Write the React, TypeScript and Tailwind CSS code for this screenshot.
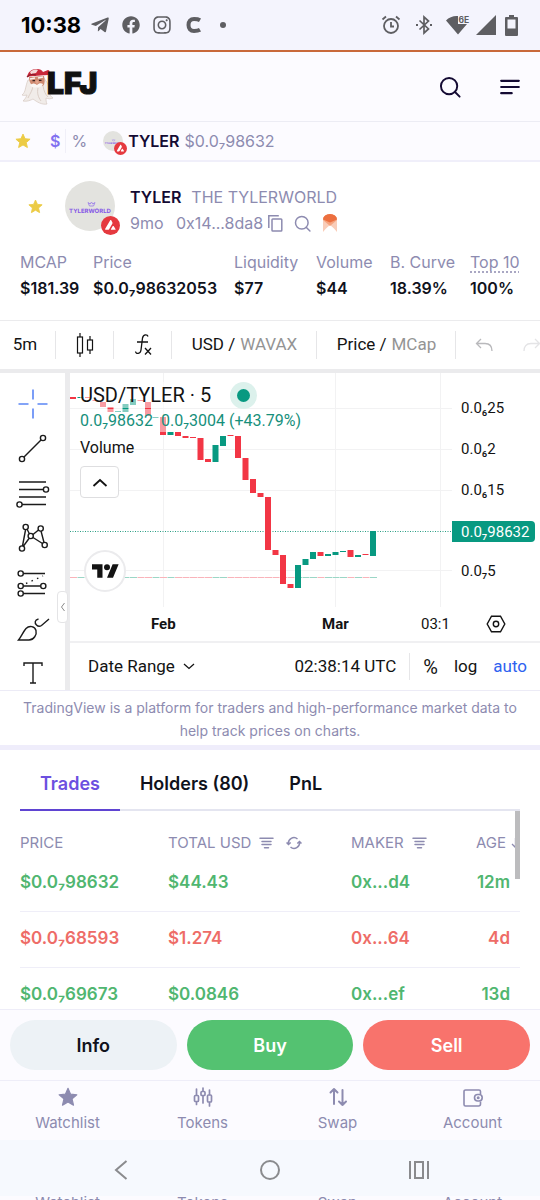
import React from "react";
import { FaTelegramPlane, FaFacebook, FaInstagram } from "react-icons/fa";

const STAR =
  "M12 1.6l3.1 7 7.5.7-5.7 5 1.7 7.5L12 17.9l-6.6 3.9 1.7-7.5-5.7-5 7.5-.7z";

function Star({ className }: { className: string }) {
  return (
    <svg viewBox="0 0 24 24" className={className} fill="currentColor" stroke="currentColor" strokeWidth="1.4" strokeLinejoin="round">
      <path d={STAR} />
    </svg>
  );
}

function Search({ className }: { className: string }) {
  return (
    <svg viewBox="0 0 24 24" className={className} fill="none" stroke="currentColor" strokeWidth="2.1" strokeLinecap="round">
      <circle cx="11" cy="11" r="8.9" />
      <path d="M17.2 17.2l5.3 5.3" />
    </svg>
  );
}

function Avax({ className }: { className: string }) {
  return (
    <svg viewBox="0 0 18 18" className={className}>
      <circle cx="9" cy="9" r="9" fill="#e5393f" />
      <path d="M8.6 4.3c.4-.6.9-.6 1.2 0l.9 1.6c.3.5.3.9 0 1.4l-3 5.2c-.3.4-.5.6-1 .6H4.600c-.7 0-.9-.4-.6-1z" fill="#fff" />
      <path d="M11 9.800c.3-.5.8-.5 1.100 0l1.600 2.400c.3.5.1.9-.5.9h-3.200c-.6 0-.8-.4-.5-.9z" fill="#fff" />
    </svg>
  );
}

function TokenAvatar({ className }: { className: string }) {
  return (
    <svg viewBox="0 0 50 50" className={className}>
      <circle cx="25" cy="25" r="25" fill="#e3e3df" />
      <path d="M23 21.500l1.500 3.500h4l1.500-3.500-2.300 1.500-1.200-2-1.300 2z" fill="none" stroke="#a58be8" strokeWidth="1" />
      <text x="25" y="31.500" textAnchor="middle" fontSize="6" fontWeight="700" fill="#8657e6" textRendering="geometricPrecision" fontFamily="Inter, sans-serif">
        TYLERWORLD
      </text>
    </svg>
  );
}

function Wizard() {
  return (
    <svg viewBox="0 0 34 38" className="h-[38px] w-[34px]">
      <path d="M7 12C4 19 5 24 1 27c2 1 4 0 5 0-1 3-3 5-4 6 4 1 8-1 10-2 4 3 9 6 14 5-1-2-1-4-1-6 2 1 5 1 7 0-5-3-4-9-5-14L23 10z" fill="#f1ece9" stroke="#d6c8c2" strokeWidth=".7" />
      <path d="M12 18c-1 6-4 9-5 12M17 20c-1 5 0 9 3 13M22 18c1 5 2 8 5 11" fill="none" stroke="#d4c5bd" strokeWidth=".8" />
      <path d="M8 9l15-1c1 4 1 8-1 10-3-2-4 0-6 1-4 0-8-3-8-10z" fill="#cf8b72" />
      <path d="M9 11l5-1M17 10l5-1" stroke="#f8f2ef" strokeWidth="1.700" />
      <path d="M11.500 12.700h2.500M18 12.300h2.500" stroke="#3b2320" strokeWidth="1.200" />
      <path d="M14 14l2-2 2 2-2 2z" fill="#e3a58d" />
      <path d="M9 17c3-2 5-2 7 0 2-2 4-2 6-1-1 3-4 3-6 3-2 1-5 1-7-2z" fill="#faf7f5" />
      <path d="M6 9C7 4 10 1 16 1c3 0 5 1 6 3l5-2c2 0 2 3 0 5-6 0-10 1-13 1-3 0-5 0-8 1z" fill="#c8283a" />
      <path d="M9 4c2-2 5-3 8-2l-2 3-5 1z" fill="#f3d9d8" />
      <path d="M6 9c3-3 6-3 9-2" stroke="#8f1c2b" strokeWidth="1.300" fill="none" />
    </svg>
  );
}

function StatusBar() {
  return (
    <div className="flex h-[52px] items-center border-b-2 border-[#c9693a] bg-[#f4f4fd] pr-[22px] pl-[21px] text-[#5e5e62]">
      <span className="w-[69px] text-[22px] font-bold text-black">10:38</span>
      <FaTelegramPlane className="h-5 w-5" />
      <FaFacebook className="ml-[12px] h-[18px] w-[18px]" />
      <FaInstagram className="ml-[12px] h-5 w-5" />
      <svg viewBox="0 0 16 16" className="ml-[14px] h-4 w-4" fill="none" stroke="currentColor" strokeWidth="4">
        <path d="M14 3.200C12 2 9 2 8 2 4.500 2 2.500 4.500 2.500 8S4.500 14 8 14c2 0 4 0 6-1.200" />
      </svg>
      <span className="ml-[18px] h-[6px] w-[6px] rounded-full bg-current" />
      <span className="grow" />
      <svg viewBox="0 0 20 20" className="h-5 w-5" fill="none" stroke="currentColor" strokeWidth="1.800">
        <circle cx="10" cy="11" r="7" />
        <path d="M10 7v4.500h3M1.500 4.500L5 1.500M18.500 4.500L15 1.500" />
      </svg>
      <svg viewBox="0 0 18 20" className="ml-[14px] h-5 w-[18px]" fill="none" stroke="currentColor" strokeWidth="1.700">
        <path d="M4.500 5.500l9 8.500L9 18V2l4.500 4-9 8.500" />
        <path d="M1 10h2M15 10h2" strokeWidth="2.200" />
      </svg>
      <svg viewBox="0 0 24 22" className="ml-[13px] h-[22px] w-6" fill="currentColor">
        <path d="M0 6.500C3 3 8 1.500 12 2v8h9l-9 10.500z" />
        <text x="12.500" y="8.500" fontSize="8.500" fontWeight="700" fontFamily="Inter, sans-serif">6E</text>
      </svg>
      <svg viewBox="0 0 20 20" className="ml-[6px] h-5 w-5" fill="currentColor">
        <path d="M20 0v20H0z" />
      </svg>
      <svg viewBox="0 0 13 21" className="ml-[9px] h-[21px] w-[13px]" fill="currentColor">
        <path fillRule="evenodd" d="M4 0h5v2h3a1 1 0 011 1v17a1 1 0 01-1 1H1a1 1 0 01-1-1V3a1 1 0 011-1h3zM2.500 4.500v9h8v-9z" />
      </svg>
    </div>
  );
}

function Header() {
  return (
    <header className="flex h-[70px] items-center justify-between border-b border-[#ececf4] bg-[#fcfbff] pr-[20px] pl-[21px]">
      <a href="#home" aria-label="LFJ home" className="flex items-center">
        <Wizard />
        <span className="-ml-[8px] pb-[7px] text-[30px] leading-none font-black text-[#111] [-webkit-text-stroke:1px_#111]">LFJ</span>
      </a>
      <div className="flex items-center gap-[39px] text-[#140a33]">
        <button aria-label="Search">
          <Search className="h-[22px] w-[22px]" />
        </button>
        <button aria-label="Menu">
          <svg viewBox="0 0 20 16" className="h-4 w-5" stroke="currentColor" strokeWidth="2.200" strokeLinecap="round">
            <path d="M1.200 1.800h17.600M1.200 8h17.600M1.200 14.200h10.500" />
          </svg>
        </button>
      </div>
    </header>
  );
}

function Ticker() {
  return (
    <div className="flex h-[40px] items-center border-b-2 border-[#f0effa] bg-[#fcfbff] pl-[15px] text-[16px] text-[#8d8bb0]">
      <button aria-label="Favourites"><Star className="block h-4 w-4 text-[#eccb45]" /></button>
      <button className="ml-[19px] font-semibold text-[#8271f0]">$</button>
      <span className="mx-[5px] h-6 w-px bg-[#f0eff8]" />
      <button>%</button>
      <a href="#tyler" className="ml-[16px] flex items-center">
        <span className="relative mr-[5px] block">
          <TokenAvatar className="block h-5 w-5" />
          <Avax className="absolute top-[11px] left-[11px] h-[13px] w-[13px]" />
        </span>
        <span className="font-semibold text-[#140a33]">TYLER</span>
        <span className="ml-[5px]">$0.0₇98632</span>
      </a>
    </div>
  );
}

const stats = [
  ["MCAP", "$181.39"],
  ["Price", "$0.0₇98632053"],
  ["Liquidity", "$77"],
  ["Volume", "$44"],
  ["B. Curve", "18.39%"],
  ["Top 10", "100%"],
];

function TokenInfo() {
  return (
    <section className="h-[158px] bg-white pt-[14px] text-[#8d8bb0]">
      <div className="flex items-center pl-[28px]">
        <button aria-label="Watch TYLER"><Star className="block h-[15px] w-[15px] text-[#eccb45]" /></button>
        <div className="relative ml-[22px]">
          <TokenAvatar className="block h-[50px] w-[50px]" />
          <Avax className="absolute top-[35px] left-[36px] h-[19px] w-[19px]" />
        </div>
        <div className="ml-[15px] pt-[8px] text-[16px] leading-[26px]">
          <div className="flex gap-[10px]">
            <h1 className="font-semibold text-[#140a33]">TYLER</h1>
            <span>THE TYLERWORLD</span>
          </div>
          <div className="flex items-center">
            <span className="w-[46px]">9mo</span>
            <span>0x14...8da8</span>
            <button aria-label="Copy address" className="ml-[5px]">
              <svg viewBox="0 0 15 17" className="block h-[17px] w-[15px]" fill="none" stroke="currentColor" strokeWidth="1.500">
                <path d="M.8 13V.8h10" />
                <rect x="4" y="4" width="9.800" height="12" rx=".8" />
              </svg>
            </button>
            <a href="#explorer" aria-label="Explorer" className="ml-[11px]"><Search className="block h-[17px] w-[17px]" /></a>
            <svg viewBox="0 0 14 18" className="ml-[12px] h-[18px] w-[14px]">
              <path d="M0 6a7 6 0 0114 0v12l-3-3.500L7 11l-4 3.500L0 18z" fill="#f9cdb9" />
              <path d="M0 6a7 6 0 0114 0l-7 6z" fill="#f5a37e" />
              <path d="M0 5.500A7 5.500 0 0114 5.500L7 8.500z" fill="#ec6f3f" />
            </svg>
          </div>
        </div>
      </div>
      <dl className="mt-[13px] grid grid-cols-[73px_141px_82px_74px_80px_1fr] pl-[20px] text-[16px] leading-[26px]">
        {stats.map(([label, value]) => (
          <div key={label}>
            <dt>
              <span className={label === "Top 10" ? "underline decoration-dotted underline-offset-4" : ""}>{label}</span>
            </dt>
            <dd className="font-semibold text-[#10121c]">{value}</dd>
          </div>
        ))}
      </dl>
    </section>
  );
}

function Toolbar() {
  const cell = "relative flex h-full items-center justify-center";
  const sep = <span className="absolute top-[10px] right-0 h-7 w-px bg-[#e6e6e8]" />;
  return (
    <div className="flex h-[53px] border-t border-b-4 border-[#ebebed] bg-white font-[Roboto,sans-serif] text-[17px] text-[#131313]">
      <button className={`${cell} w-[56px] pr-[6px]`}>5m{sep}</button>
      <button aria-label="Candles" className={`${cell} w-[58px]`}>
        <svg viewBox="0 0 20 28" className="h-7 w-5" fill="none" stroke="currentColor" strokeWidth="1.200">
          <rect x="2.500" y="6" width="5" height="16" />
          <path d="M5 2v4M5 22v4M15 5v4M15 19v4" />
          <rect x="12.500" y="9" width="5" height="10" />
        </svg>
        {sep}
      </button>
      <button aria-label="Indicators" className={`${cell} w-[58px]`}>
        <svg viewBox="0 0 20 26" className="h-[26px] w-5" fill="none" stroke="currentColor" strokeWidth="1.300">
          <path d="M15 4.500C14.500 2.500 10.500 1.800 9.500 6L8 18c-.5 4-5 4.500-5.500 1.500M4 10h11M12 16l6 6.500M18 16l-6 6.500" />
        </svg>
        {sep}
      </button>
      <button className={`${cell} w-[145px]`}>USD /<span className="ml-[5px] text-[#949494]">WAVAX</span>{sep}</button>
      <button className={`${cell} w-[139px]`}>Price /<span className="ml-[5px] text-[#949494]">MCap</span>{sep}</button>
      <button aria-label="Undo" className={`${cell} w-[56px] text-[#b9b9bc]`}>
        <svg viewBox="0 0 18 14" className="h-[14px] w-[18px]" fill="none" stroke="currentColor" strokeWidth="1.300">
          <path d="M6 1L1.500 5.500 6 10M1.500 5.500H10c5 0 7 3 7 7.500" />
        </svg>
      </button>
      <button aria-label="Redo" className="flex h-full flex-1 items-center overflow-hidden pl-[11px] text-[#e4e4e6]">
        <svg viewBox="0 0 18 14" className="h-[14px] w-[18px] shrink-0" fill="none" stroke="currentColor" strokeWidth="1.300">
          <path d="M12 1l4.500 4.500L12 10M16.500 5.500H8c-5 0-7 3-7 7.500" />
        </svg>
      </button>
    </div>
  );
}

const dot = (x: number, y: number) => <circle cx={x} cy={y} r="2.600" />;

const tools: [string, React.ReactNode][] = [
  ["Cross", <path stroke="#5b86f5" strokeWidth="1.600" d="M18 3.500v10M18 22.500v10M3.500 18h10M22.500 18h10" />],
  ["Trend line", <>{dot(7, 28)}{dot(28, 7)}<path d="M9 26L26 9" /></>],
  ["Fib retracement", <>{dot(31, 13.5)}{dot(4.5, 28.5)}<path d="M4 6h27M4 13.500h24M4 21h27M7 28.500h24" /></>],
  ["Patterns", <>{dot(10.7, 6)}{dot(25.7, 7.5)}{dot(15.7, 15)}{dot(29.7, 24)}{dot(7, 27.5)}<path d="M10.500 9L7.500 25M12 8l2.500 5M18 13.500l5.500-4.500M18 16.500l9.500 6M26 10l3 11.500M14 17.500l-5.500 7.500" /></>],
  ["Projection", <>{dot(5.7, 7.5)}{dot(5.7, 20)}{dot(28.3, 20)}{dot(5.7, 27.5)}<path d="M8.500 7.500H30M8.500 20h17M8.500 27.500H30" /><path strokeDasharray="1.500 4.500" d="M11 17.500L28 10" /></>],
  ["Brush", <path d="M3.500 29C6 26 8 21 11 17.500c3.500-3.500 9-2 10 2s-2 9.500-7 9.500zM23.500 8c-4 1-4 4-2 6s3.500 1.500 5 .5L34 8" />],
  ["Text", <path d="M9 10V7h18v3M18 7v20M15 27h6" />],
];

function ToolRail() {
  return (
    <div className="h-[317px] w-[65px] overflow-hidden bg-white pt-[8px]">
      {tools.map(([name, icon]) => (
        <button key={name} aria-label={name} className="flex h-[45px] w-full items-center justify-center text-[#1b1b1b]">
          <svg viewBox="0 0 36 36" className="h-9 w-9" fill="none" stroke="currentColor" strokeWidth="1.400">
            {icon}
          </svg>
        </button>
      ))}
    </div>
  );
}

// Each candle: direction, top and bottom in plot units.
const candles: ["r" | "g", number, number][] = [
  ["r", 24, 26], ["g", 24, 25], ["r", 24, 25], ["r", 27, 28], ["r", 29, 34], ["r", 34, 39],
  ["g", 38, 39], ["g", 31, 39], ["g", 26, 32], ["r", 27, 28], ["r", 29, 43], ["g", 44, 45],
  ["r", 44, 62], ["g", 59, 62], ["r", 59, 63], ["r", 63, 65], ["r", 64, 65], ["r", 65, 87],
  ["r", 86, 89], ["g", 72, 89], ["g", 63, 73], ["r", 62, 63], ["r", 63, 85], ["r", 85, 107],
  ["r", 106, 120], ["r", 120, 124], ["r", 124, 177], ["r", 177, 182], ["r", 182, 211], ["r", 211, 215],
  ["g", 192, 215], ["g", 186, 192], ["g", 179, 186], ["r", 179, 183], ["g", 181, 183], ["g", 179, 182],
  ["g", 178, 179], ["r", 177, 184], ["g", 182, 184], ["r", 181, 182], ["g", 158, 183],
];

function Plot() {
  return (
    <svg viewBox="0 0 382 234" className="block h-[234px] w-[382px]">
      <path d="M0 35.500h382M0 76.500h382M0 117.500h382M0 197.500h382M93.500 0v234M265.500 0v234M370.500 0v234" stroke="#f2f2f3" />
      <path d="M0 158.500h382" stroke="#2a9d83" strokeDasharray="1 1.500" />
      {candles.map(([dir, top, bottom], i) => (
        <g key={i}>
          <rect x={i * 7.5} y="204" width="7" height="1" fill={dir === "r" ? "#f9b3ba" : "#9bd6c6"} />
          <rect x={i * 7.5} y={top} width="6" height={bottom - top} fill={dir === "r" ? "#f23645" : "#089981"} />
        </g>
      ))}
    </svg>
  );
}

function Chart() {
  return (
    <section className="flex bg-[#ebebed] font-[Roboto,sans-serif] text-[#131313]">
      <div className="relative mr-[5px]">
        <ToolRail />
        <button aria-label="Hide tools" className="absolute top-[218px] left-[57px] flex h-[32px] w-[11px] items-center justify-center rounded border border-[#e4e4e6] bg-white">
          <svg viewBox="0 0 6 10" className="h-[10px] w-[6px]" fill="none" stroke="#8a8a8a"><path d="M4.500 1L1.500 5l3 4" /></svg>
        </button>
      </div>
      <div className="min-w-0 flex-1 bg-white">
        <div className="flex">
          <div className="relative min-w-0 flex-1 overflow-hidden">
            <Plot />
            <div className="absolute top-[9px] left-[10px]">
              <div className="flex h-[26px] w-max items-center bg-white/50 text-[20px]">
                USD/TYLER · 5
                <span className="ml-[19px] flex h-[27px] w-[27px] items-center justify-center rounded-full bg-[#dcf1ec]">
                  <span className="h-[13px] w-[13px] rounded-full bg-[#089981]" />
                </span>
              </div>
              <div className="mt-px flex h-[23px] w-max items-center gap-[8px] bg-white/50 text-[16px] text-[#168f7b]">
                <span>0.0₇98632</span>
                <span>0.0₇3004 (+43.79%)</span>
              </div>
              <div className="mt-[4px] text-[16px] leading-[24px]">Volume</div>
              <button aria-label="Collapse legend" className="mt-[6px] flex h-8 w-[39px] items-center justify-center rounded border border-[#dedee0] bg-white">
                <svg viewBox="0 0 16 9" className="h-[9px] w-4" fill="none" stroke="#131313" strokeWidth="1.800"><path d="M1.500 8L8 2l6.500 6" /></svg>
              </button>
            </div>
            <a href="#tradingview" aria-label="TradingView" className="absolute top-[177px] left-[14px] flex h-[42px] w-[42px] items-center justify-center rounded-full border-2 border-[#ebebed] bg-white">
              <svg viewBox="0 4 36 18" className="h-[14px] w-[27px]" fill="#131313">
                <path d="M14 22H7V11H0V4h14v18zM28 22h-8l7.500-18h8L28 22z" />
                <circle cx="20" cy="8" r="4" />
              </svg>
            </a>
          </div>
          <div className="relative w-[88px] text-[15px] leading-[20px]">
            <div className="flex flex-col gap-[21px] pt-[25px] pl-[9px]">
              <span>0.0₆25</span>
              <span>0.0₆2</span>
              <span>0.0₆15</span>
              <span className="mt-[40px]">0.0₇5</span>
            </div>
            <span className="absolute top-[148px] left-0 flex h-[21px] w-[83px] items-center rounded-r-sm bg-[#089981] pl-[9px] text-white">0.0₇98632</span>
          </div>
        </div>
        <div className="flex h-[36px] items-center border-b-2 border-[#f0f0f2] text-[15px]">
          <span className="ml-[81px] w-[25px] font-bold">Feb</span>
          <span className="ml-[146px] w-[27px] font-bold">Mar</span>
          <span className="ml-[72px] w-[29px]">03:1</span>
          <button aria-label="Axis settings" className="ml-[36px]">
            <svg viewBox="0 0 20 18" className="block h-[18px] w-5" fill="none" stroke="#131313" strokeWidth="1.400">
              <path d="M5.500 1.200h9L18.800 9l-4.300 7.800h-9L1.200 9z" />
              <circle cx="10" cy="9" r="2.700" />
            </svg>
          </button>
        </div>
        <div className="flex h-[47px] items-center pr-[13px] pl-[18px] text-[17px]">
          <button className="flex items-center gap-[8px]">
            Date Range
            <svg viewBox="0 0 12 7" className="h-[7px] w-3" fill="none" stroke="currentColor" strokeWidth="1.300"><path d="M1 1l5 4.500L11 1" /></svg>
          </button>
          <span className="grow" />
          <button>02:38:14 UTC</button>
          <span className="mr-[13px] ml-[13px] h-[27px] w-px bg-[#e6e6e8]" />
          <button className="text-[20px]">%</button>
          <button className="ml-[16px]">log</button>
          <button className="ml-[16px] text-[#2f62f0]">auto</button>
        </div>
      </div>
    </section>
  );
}

function FilterIcon() {
  return (
    <svg viewBox="0 0 15 12" className="h-3 w-[15px]" stroke="currentColor" strokeWidth="1.500" strokeLinecap="round">
      <path d="M1 1.200h13M3 4.400h9M3 7.600h9M5.500 10.800h4" />
    </svg>
  );
}

const trades = [
  { price: "$0.0₇98632", usd: "$44.43", maker: "0x...d4", age: "12m", tone: "text-[#50b670]" },
  { price: "$0.0₇68593", usd: "$1.274", maker: "0x...64", age: "4d", tone: "text-[#ee6c67]" },
  { price: "$0.0₇69673", usd: "$0.0846", maker: "0x...ef", age: "13d", tone: "text-[#50b670]" },
];

function Trades() {
  return (
    <section className="bg-white px-[20px]">
      <div role="tablist" className="flex h-[61px] border-b-2 border-[#e4e5f0] text-[18px] font-semibold text-[#10121c]">
        <button role="tab" aria-selected="true" className="-mb-[2px] border-b-2 border-[#5f44d2] px-[20px] pt-[8px] text-[#6c50e0]">Trades</button>
        <button role="tab" className="px-[20px] pt-[8px]">Holders (80)</button>
        <button role="tab" className="px-[20px] pt-[8px]">PnL</button>
      </div>
      <div className="relative h-[198px] overflow-hidden">
        <table className="w-full table-fixed text-left">
          <thead className="text-[15px] text-[#8d8bb0]">
            <tr className="h-[44px] whitespace-nowrap">
              <th className="w-[148px] pt-[20px] font-normal">PRICE</th>
              <th className="w-[183px] pt-[20px] font-normal">
                <span className="flex items-center">
                  <span className="mr-[8px]">TOTAL USD</span>
                  <FilterIcon />
                  <svg viewBox="0 0 16 14" className="ml-[12px] h-[14px] w-4" fill="none" stroke="currentColor" strokeWidth="1.500">
                    <path d="M2.500 8a5.500 5.500 0 019-5M13.500 6a5.500 5.500 0 01-9 5M.5 6.500l2 2 2.200-2M11.300 7.500l2.200-2 2 2" />
                  </svg>
                </span>
              </th>
              <th className="pt-[20px] font-normal">
                <span className="flex items-center gap-[8px]">MAKER<FilterIcon /></span>
              </th>
              <th className="w-[60px] pt-[20px] font-normal">
                <span className="flex items-center justify-end gap-[5px]">
                  AGE
                  <svg viewBox="0 0 9 12" className="h-3 w-[9px]" fill="none" stroke="currentColor" strokeWidth="1.300"><path d="M4.500 1v9.500M1 7l3.500 3.500L8 7" /></svg>
                </span>
              </th>
            </tr>
          </thead>
          <tbody className="text-[17px] font-semibold">
            {trades.map((t) => (
              <tr key={t.price} className={`h-[56px] border-b border-[#efeef8] ${t.tone}`}>
                <td>{t.price}</td>
                <td>{t.usd}</td>
                <td>{t.maker}</td>
                <td className="pr-[10px] text-right">{t.age}</td>
              </tr>
            ))}
          </tbody>
        </table>
        <span className="absolute top-0 right-0 h-[68px] w-[5px] bg-[#bcbcbe]" />
      </div>
    </section>
  );
}

const navItems: [string, React.ReactNode][] = [
  ["Watchlist", <Star className="h-5 w-5" />],
  ["Tokens",
    <svg viewBox="0 0 20 20" className="h-5 w-5" fill="none" stroke="currentColor" strokeWidth="1.700" strokeLinecap="round">
      <rect x="1.500" y="8.500" width="4" height="6" rx="1" /><rect x="8" y="4.500" width="4" height="4" rx="1" /><rect x="14.500" y="8" width="4" height="7" rx="1" />
      <path d="M3.500 2v6M3.500 15v2.500M10 1v3M10 9v7M16.500 3v4.500M16.500 15.500V19" />
    </svg>],
  ["Swap",
    <svg viewBox="0 0 20 20" className="h-5 w-5" fill="none" stroke="currentColor" strokeWidth="2" strokeLinecap="round" strokeLinejoin="round">
      <path d="M6 17V2M2.500 5.500L6 2l3.500 3.500M14.500 3v15M11 14.500l3.500 3.500 3.500-3.500" />
    </svg>],
  ["Account",
    <svg viewBox="0 0 20 20" className="h-5 w-5" fill="none" stroke="currentColor" strokeWidth="1.600">
      <path d="M17.500 7V4.500a1.500 1.500 0 00-1.500-1.500H2.500A1.500 1.500 0 001 4.500v13A1.500 1.500 0 002.500 19H15.500a2 2 0 002-2v-2.500" />
      <rect x="11.500" y="7.500" width="7.700" height="6.500" rx="3.200" />
      <circle cx="15.200" cy="10.700" r=".7" />
    </svg>],
];

export default function App() {
  return (
    <div className="w-full overflow-hidden bg-white font-[Inter,sans-serif]">
      <StatusBar />
      <Header />
      <Ticker />
      <TokenInfo />
      <Toolbar />
      <Chart />
      <p className="border-t border-b-[5px] border-t-[#ecebf6] border-b-[#efedfb] bg-white px-[10px] pt-[5px] pb-[3px] text-center text-[14px] leading-[23px] text-[#8d8bb0]">
        TradingView is a platform for traders and high-performance market data to help track prices on charts.
      </p>
      <Trades />
      <div className="flex gap-[10px] border-y border-[#eeedf8] bg-[#fcfbff] px-[10px] py-[10px] text-[18px] font-semibold">
        <button className="h-[50px] flex-1 rounded-full bg-[#edf2f6] text-[#10121c]">Info</button>
        <button className="h-[50px] flex-1 rounded-full bg-[#54c271] text-white">Buy</button>
        <button className="h-[50px] flex-1 rounded-full bg-[#f8736c] text-white">Sell</button>
      </div>
      <nav className="grid h-[59px] grid-cols-4 bg-[#fcfbff] text-[15px] text-[#8d8bb0]">
        {navItems.map(([name, icon]) => (
          <a key={name} href={`#${name}`} className="flex flex-col items-center pt-[6px]">
            {icon}
            <span className="mt-[5px] leading-[22px]">{name}</span>
          </a>
        ))}
      </nav>
      <div className="flex h-[56px] items-center bg-[#f6f9fe] pt-[4px] text-[#8a8b8e]">
        <button aria-label="Back" className="ml-[113px]">
          <svg viewBox="0 0 16 20" className="block h-5 w-4" fill="none" stroke="currentColor" strokeWidth="2"><path d="M13.500 1L3 10l10.500 9" /></svg>
        </button>
        <button aria-label="Home" className="ml-[131px] h-5 w-5 rounded-full border-2 border-current" />
        <button aria-label="Recents" className="ml-[129px]">
          <svg viewBox="0 0 20 20" className="block h-5 w-5" fill="none" stroke="currentColor" strokeWidth="2"><path d="M1 1v18M19 1v18M6 2h8v16H6z" /></svg>
        </button>
      </div>
      <div aria-hidden="true" className="grid h-[5px] grid-cols-4 overflow-hidden bg-[#fcfbff] text-center text-[15px] leading-[14px] text-[#8d8bb0]">
        {navItems.map(([name]) => (
          <span key={name}>{name}</span>
        ))}
      </div>
    </div>
  );
}
